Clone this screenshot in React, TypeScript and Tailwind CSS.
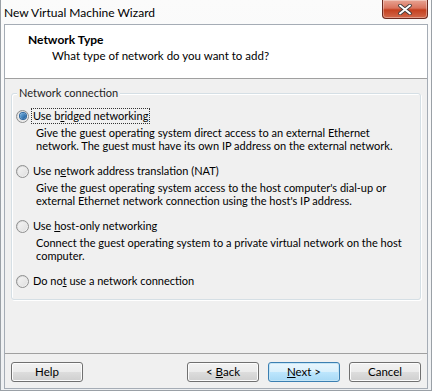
import React from 'react';

const font = { fontFamily: 'Lato, "Noto Sans", "Liberation Sans", sans-serif' };

function Radio({ checked }: { checked?: boolean }) {
  return (
    <span className="relative flex h-[13px] w-[13px] shrink-0 items-center justify-center rounded-full border border-[#8e8f8f] bg-gradient-to-br from-[#d4d4d4] to-[#f7f7f7]">
      <span className="h-[9px] w-[9px] rounded-full bg-gradient-to-br from-[#f4f4f4] to-[#e0e0e0]">
        {checked && <span className="m-[1.5px] block h-[6px] w-[6px] rounded-full bg-gradient-to-br from-[#7bb7e4] to-[#0e5596] ring-1 ring-[#2b66a0]" />}
      </span>
    </span>
  );
}

function Option({
  label,
  desc,
  checked,
  focused,
}: {
  label: React.ReactNode;
  desc?: string[];
  checked?: boolean;
  focused?: boolean;
}) {
  return (
    <div className="flex flex-col whitespace-nowrap">
      <div className="flex h-[16px] items-center gap-[3px]">
        <Radio checked={checked} />
        <span
          className={
            'px-[1px] leading-[14px] ' + (focused ? 'outline-1 outline-dotted outline-[#333]' : '')
          }
        >
          {label}
        </span>
      </div>
      {desc && (
        <div className="mt-[2px] pl-[20px] leading-[13px]">
          {desc.map((d) => (
            <div key={d}>{d}</div>
          ))}
        </div>
      )}
    </div>
  );
}

function Button({ children, primary }: { children: React.ReactNode; primary?: boolean }) {
  return (
    <button
      className={
        'relative h-[20px] w-[72px] overflow-hidden rounded-[3px] border text-[11.5px] leading-[18px] text-black ' +
        (primary
          ? 'border-[#3c7fb1] bg-[linear-gradient(#eaf6fd_0%,#d9f0fc_50%,#bee6fd_50%,#a7d9f5_100%)] shadow-[inset_0_0_0_1px_#c4e5f6]'
          : 'border-[#707070] bg-[linear-gradient(#f2f2f2_0%,#ebebeb_50%,#dddddd_50%,#cfcfcf_100%)] shadow-[inset_0_0_0_1px_#fcfcfc]')
      }
    >
      {children}
    </button>
  );
}

export default function App() {
  return (
    <div
      className="flex h-[391px] w-[432px] flex-col overflow-hidden border-x border-b border-[#9aa0a6] bg-[linear-gradient(#fbfbfb,#eef0f2)] text-[11px] text-black"
      style={font}
    >
      {/* Title bar */}
      <div className="flex h-[24px] shrink-0 items-start">
        <span className="pl-[3px] pt-[5px] text-[12px] leading-[16px]">New Virtual Machine Wizard</span>
        <div className="ml-auto mr-[3px] flex h-[19px] w-[46px] items-center justify-center rounded-b-[4px] border border-t-0 border-[#6b2a20] bg-[linear-gradient(#e8a493_0%,#d9735d_45%,#c4401f_55%,#d2694c_100%)] shadow-[inset_0_0_0_1px_rgba(255,255,255,0.35)]">
          <svg width="14" height="11" viewBox="0 0 14 11">
            <path d="M2 1.5 L12 9.5 M12 1.5 L2 9.5" stroke="#3b3b3b" strokeWidth="3.6" strokeLinecap="round" />
            <path d="M2 1.5 L12 9.5 M12 1.5 L2 9.5" stroke="#ffffff" strokeWidth="2" strokeLinecap="round" />
          </svg>
        </div>
      </div>

      {/* Client area */}
      <div className="mx-[3px] mb-[1px] flex flex-1 flex-col border border-[#a5acb5] bg-[#f0f0f0]">
        {/* Header */}
        <div className="h-[54px] shrink-0 border-b border-[#a0a0a0] bg-white pl-[23px] pt-[7px]">
          <div className="text-[12px] font-bold leading-[16px]">Network Type</div>
          <div className="pl-[24px] text-[11.5px] leading-[16px]">What type of network do you want to add?</div>
        </div>

        {/* Body */}
        <div className="flex flex-1 flex-col px-[6px] pt-[14px]">
          <div className="relative flex h-[207px] flex-col gap-[11px] rounded-[3px] border border-[#d5dfe5] px-[4px] pt-[14px] shadow-[inset_1px_1px_0_#fff,1px_1px_0_#fff]">
            <span className="absolute -top-[9px] left-[5px] bg-[#f0f0f0] px-[2px] leading-[16px] text-[#1e1e1e]">
              Network connection
            </span>
            <Option
              checked
              focused
              label={
                <>
                  Use b<u>r</u>idged networking
                </>
              }
              desc={[
                'Give the guest operating system direct access to an external Ethernet',
                'network. The guest must have its own IP address on the external network.',
              ]}
            />
            <Option
              label={
                <>
                  Use n<u>e</u>twork address translation (NAT)
                </>
              }
              desc={[
                "Give the guest operating system access to the host computer's dial-up or",
                "external Ethernet network connection using the host's IP address.",
              ]}
            />
            <Option
              label={
                <>
                  Use <u>h</u>ost-only networking
                </>
              }
              desc={['Connect the guest operating system to a private virtual network on the host', 'computer.']}
            />
            <Option
              label={
                <>
                  Do no<u>t</u> use a network connection
                </>
              }
            />
          </div>
          <div className="flex-1" />
        </div>

        {/* Footer */}
        <div className="flex h-[35px] shrink-0 items-start border-t border-[#a0a0a0] bg-[#f0f0f0] px-[6px] pt-[8px]">
          <Button>Help</Button>
          <div className="ml-auto flex gap-[9px]">
            <Button>
              &lt; <u>B</u>ack
            </Button>
            <Button primary>
              <u>N</u>ext &gt;
            </Button>
            <Button>Cancel</Button>
          </div>
        </div>
      </div>
    </div>
  );
}
